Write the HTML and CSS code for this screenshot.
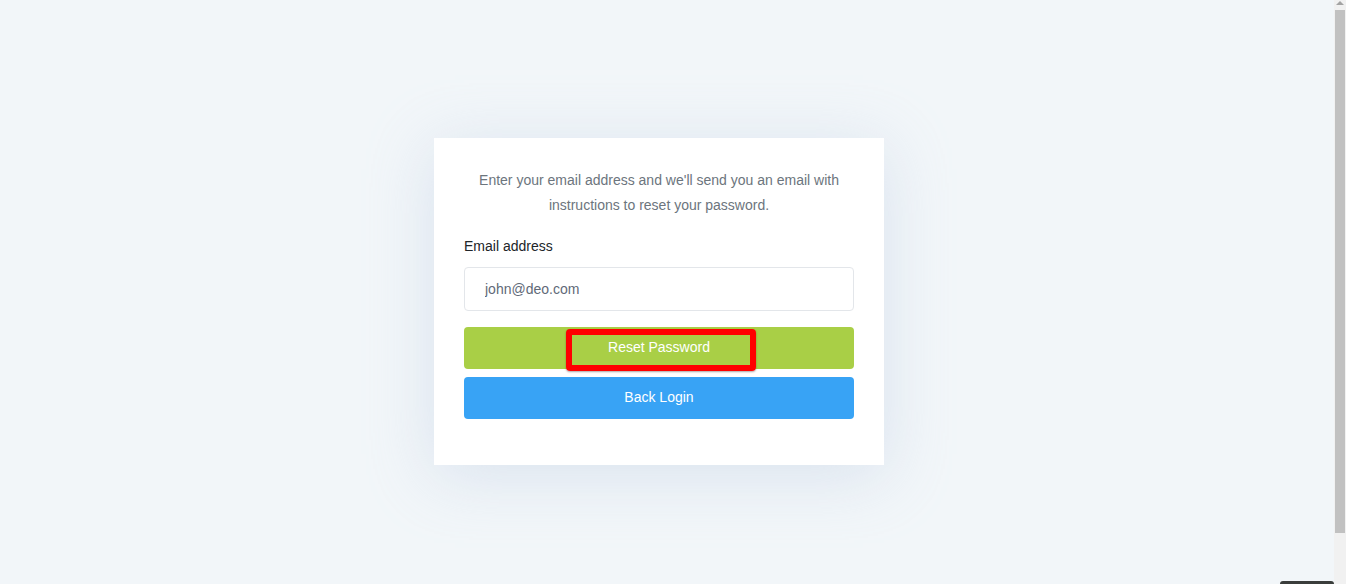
FILE: index.html
```html
<!DOCTYPE html>
<html lang="en">
<head>
    <meta charset="UTF-8">
    <meta name="viewport" content="width=device-width, initial-scale=1.0">
    <title>Forgot Password</title>
    <link rel="stylesheet" href="styles.css">
</head>
<body>

<div class="page">
    <div class="card">
        <p class="intro">Enter your email address and we'll send you an email with instructions to reset your password.</p>

        <form class="reset-form" onsubmit="return false">
            <div class="form-group">
                <label for="email">Email address</label>
                <input type="email" id="email" name="email" placeholder="john@deo.com">
            </div>

            <button type="submit" class="btn btn-reset">
                Reset Password
                <span class="highlight"></span>
            </button>
            <a href="#" class="btn btn-back">Back Login</a>
        </form>
    </div>
    <div class="corner-tab"></div>
</div>

<!-- window scrollbar -->
<div class="scrollbar">
    <div class="scroll-arrow"></div>
    <div class="scroll-thumb"></div>
</div>

</body>
</html>
```

FILE: styles.css
```css
* {
    box-sizing: border-box;
    margin: 0;
    padding: 0;
}

body {
    font-family: "Liberation Sans", Arial, sans-serif;
    background: #f2f6f9;
    color: #212529;
    height: 584px;
    overflow: hidden;
    display: flex;
}

.page {
    flex: 1;
    position: relative;
    display: flex;
    justify-content: center;
    align-items: flex-start;
    padding: 138px 16px 0 0;
}

.card {
    width: 450px;
    background: #fff;
    padding: 30px 30px 46px;
    box-shadow: 0 10px 60px rgba(188, 204, 226, 0.45);
}

.intro {
    text-align: center;
    font-size: 14px;
    line-height: 25px;
    color: #6c757d;
    margin-bottom: 18px;
}

.form-group {
    margin-bottom: 16px;
}

label {
    display: block;
    font-size: 14px;
    line-height: 20px;
    margin-bottom: 11px;
    color: #212529;
}

input {
    width: 100%;
    height: 44px;
    padding: 0 20px;
    border: 1px solid #e3e6ea;
    border-radius: 4px;
    font-family: inherit;
    font-size: 14px;
    color: #495057;
    outline: none;
}

input::placeholder {
    color: #5f6a78;
}

.btn {
    display: block;
    position: relative;
    width: 100%;
    height: 42px;
    line-height: 40px;
    border: none;
    border-radius: 4px;
    color: #fff;
    font-family: inherit;
    font-size: 14px;
    text-align: center;
    text-decoration: none;
    cursor: pointer;
}

.btn-reset {
    background: #a9cf46;
    padding-bottom: 2px;
    margin-bottom: 8px;
}

.btn-back {
    background: #38a3f5;
}

/* annotation box drawn over the button label */
.highlight {
    position: absolute;
    left: 102px;
    top: 2px;
    width: 190px;
    height: 42px;
    border: 6px solid #ff0000;
    border-radius: 4px;
    box-shadow: 0 1px 2px rgba(0, 0, 0, 0.35);
    pointer-events: none;
}

.corner-tab {
    position: absolute;
    right: 0;
    bottom: 0;
    width: 54px;
    height: 3px;
    background: #3a3d3b;
    border-radius: 3px 3px 0 0;
}

.scrollbar {
    width: 12px;
    background: #f1f1f1;
    display: flex;
    flex-direction: column;
    align-items: center;
}

.scroll-arrow {
    width: 0;
    height: 0;
    margin: 1px 0 5px;
    border-left: 4px solid transparent;
    border-right: 4px solid transparent;
    border-bottom: 4px solid #a3a3a3;
}

.scroll-thumb {
    width: 10px;
    height: 523px;
    background: #c1c1c1;
}
```
